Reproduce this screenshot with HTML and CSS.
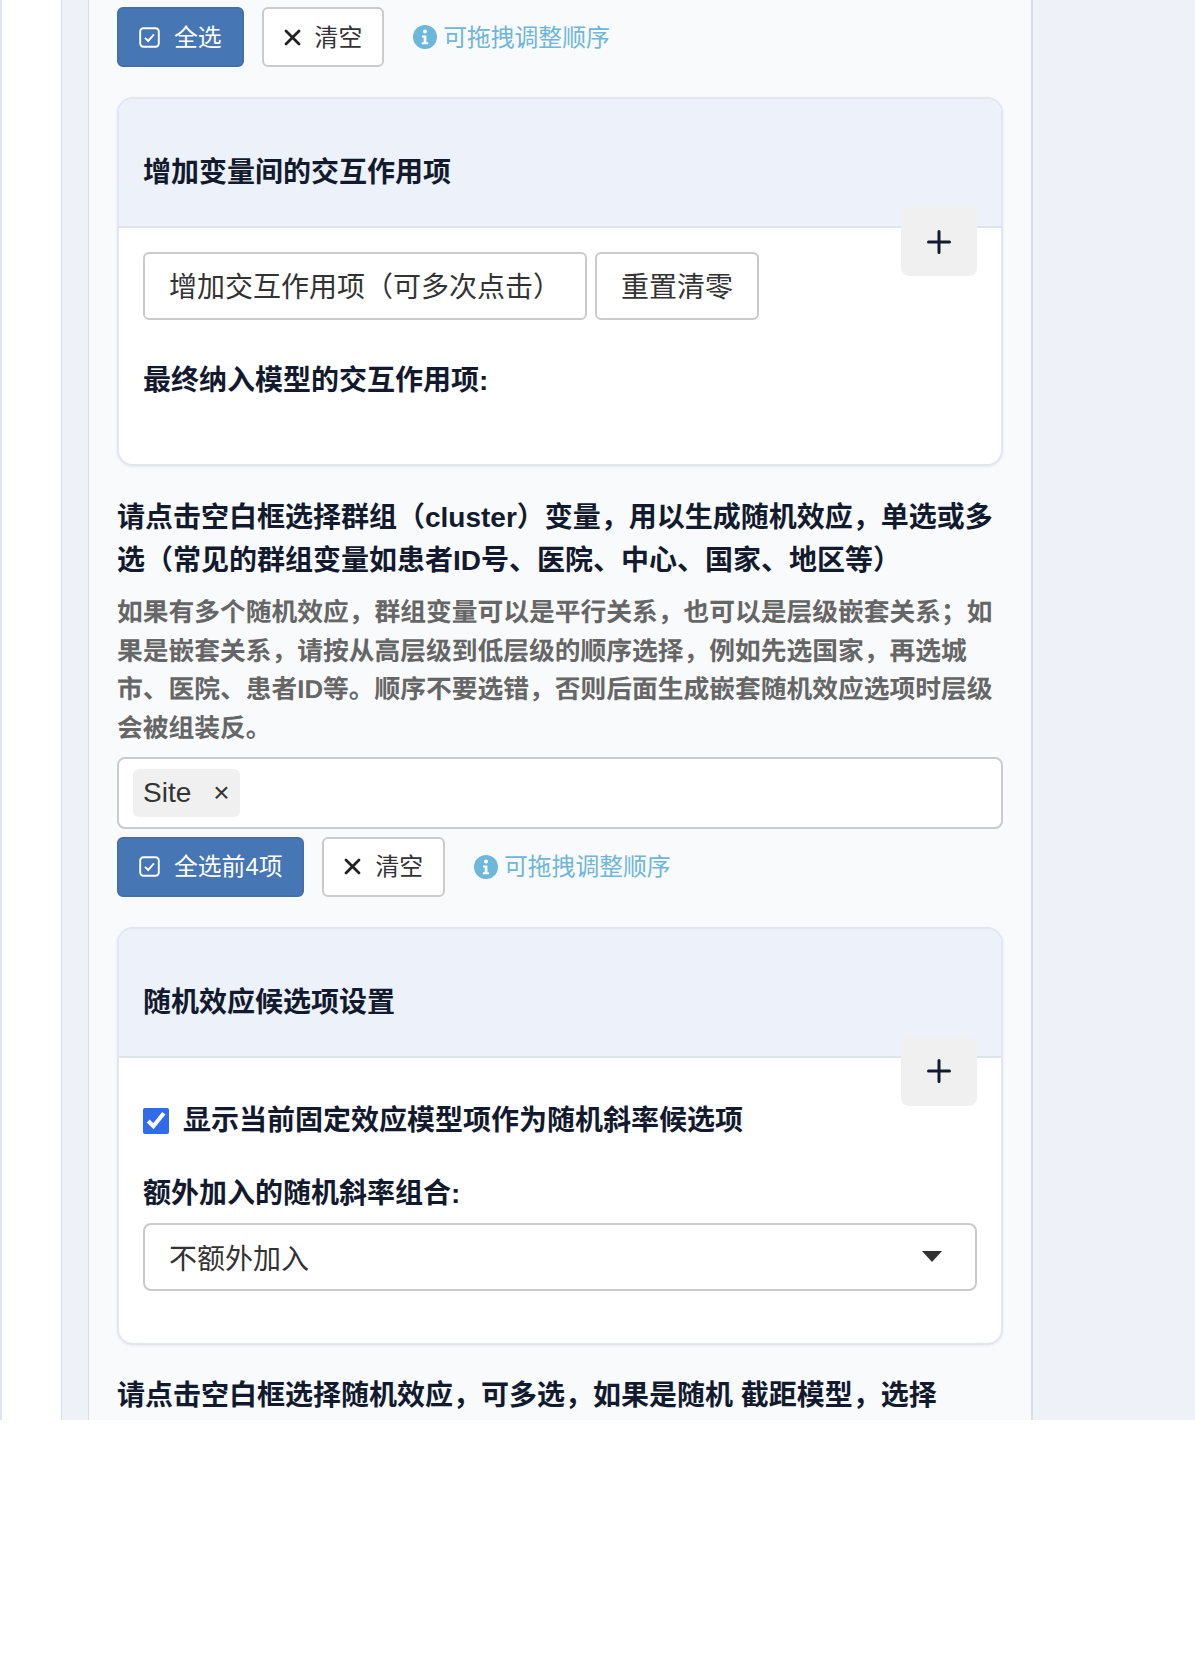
FILE: index.html
```html
<!DOCTYPE html>
<html lang="zh">

<head>
    <meta charset="UTF-8">
    <title>模型设置</title>
    <link rel="stylesheet" href="styles.css">
</head>

<body>
    <div class="frame">
        <div class="gutter"></div>
        <div class="strip"></div>
        <div class="panel">
            <div class="tools">
                <button class="btn primary">
                    <svg class="ico-check" viewBox="0 0 21 21"><rect x="1.2" y="1.2" width="18.6" height="18.6" rx="3.2"/><path d="M6 10.8l3.2 3.2 5.8-6.6"/></svg>
                    <span class="txt">全选</span>
                </button>
                <button class="btn">
                    <svg class="ico-x" viewBox="0 0 17 17"><path d="M2 2l13 13M15 2L2 15"/></svg>
                    <span class="txt">清空</span>
                </button>
                <span class="hint">
                    <svg class="ico-info" viewBox="0 0 24 24"><circle cx="12" cy="12" r="12"/><circle cx="12" cy="6.6" r="2"/><path d="M9 10.6h4.4v6.6h1.8v2H8.8v-2h1.9v-4.6H9z"/></svg>
                    <span class="txt">可拖拽调整顺序</span>
                </span>
            </div>

            <section class="card">
                <div class="card-head">增加变量间的交互作用项</div>
                <button class="plus"><svg viewBox="0 0 24 24"><path d="M12 1.5v21M1.5 12h21"/></svg></button>
                <div class="card-body">
                    <div class="actions">
                        <button class="btn big">增加交互作用项（可多次点击）</button>
                        <button class="btn big">重置清零</button>
                    </div>
                    <div class="label result">最终纳入模型的交互作用项:</div>
                </div>
            </section>

            <h4 class="title">请点击空白框选择群组（cluster）变量，用以生成随机效应，单选或多选（常见的群组变量如患者ID号、医院、中心、国家、地区等）</h4>
            <p class="help">如果有多个随机效应，群组变量可以是平行关系，也可以是层级嵌套关系；如果是嵌套关系，请按从高层级到低层级的顺序选择，例如先选国家，再选城市、医院、患者ID等。顺序不要选错，否则后面生成嵌套随机效应选项时层级会被组装反。</p>

            <div class="multi">
                <span class="tag">Site<span class="tag-x">×</span></span>
            </div>

            <div class="tools under">
                <button class="btn primary">
                    <svg class="ico-check" viewBox="0 0 21 21"><rect x="1.2" y="1.2" width="18.6" height="18.6" rx="3.2"/><path d="M6 10.8l3.2 3.2 5.8-6.6"/></svg>
                    <span class="txt">全选前4项</span>
                </button>
                <button class="btn">
                    <svg class="ico-x" viewBox="0 0 17 17"><path d="M2 2l13 13M15 2L2 15"/></svg>
                    <span class="txt">清空</span>
                </button>
                <span class="hint">
                    <svg class="ico-info" viewBox="0 0 24 24"><circle cx="12" cy="12" r="12"/><circle cx="12" cy="6.6" r="2"/><path d="M9 10.6h4.4v6.6h1.8v2H8.8v-2h1.9v-4.6H9z"/></svg>
                    <span class="txt">可拖拽调整顺序</span>
                </span>
            </div>

            <section class="card">
                <div class="card-head">随机效应候选项设置</div>
                <button class="plus"><svg viewBox="0 0 24 24"><path d="M12 1.5v21M1.5 12h21"/></svg></button>
                <div class="card-body">
                    <label class="check"><input type="checkbox" checked> 显示当前固定效应模型项作为随机斜率候选项</label>
                    <div class="label extra">额外加入的随机斜率组合:</div>
                    <div class="select">不额外加入<span class="caret"></span></div>
                </div>
            </section>

            <h4 class="title last">请点击空白框选择随机效应，可多选，如果是随机 截距模型，选择</h4>
        </div>
        <div class="side"></div>
    </div>
</body>

</html>
```

FILE: styles.css
```css
body {
    margin: 0;
    background: #fff;
    color: #141a2e;
    font-family: "Liberation Sans", "Noto Sans CJK SC", sans-serif;
    font-size: 28px;
}

.frame {
    display: flex;
    height: 1420px;
    overflow: hidden;
}

.gutter {
    width: 59px;
    border-left: 2px solid #dfe3ee;
}

.strip {
    width: 26px;
    background: #eef2f8;
    border-left: 1px solid #d9dde8;
}

.panel {
    width: 886px;
    padding: 7px 28px 0 28px;
    background: #f8fafc;
    border-left: 1px solid #d9dde8;
    border-right: 2px solid #d9dde8;
}

.side {
    flex: 1;
    background: #eef1f7;
}

.tools {
    display: flex;
    align-items: center;
    height: 60px;
}

.tools.under {
    margin-top: 8px;
}

.txt {
    margin-bottom: 4px;
}

.btn {
    display: flex;
    align-items: center;
    gap: 14px;
    height: 60px;
    padding: 0 20px;
    box-sizing: border-box;
    margin-right: 18px;
    border: 2px solid #cbcbcb;
    border-radius: 6px;
    background: #fff;
    color: #333;
    font: inherit;
    font-size: 23.8px;
}

.btn.primary {
    background: #4676b3;
    border-color: #4170ab;
    color: #fff;
}

.btn.big {
    height: 68px;
    padding: 0 24px 2px 24px;
    margin-right: 8px;
    font-size: 28px;
}

.ico-check {
    width: 21px;
    height: 21px;
    fill: none;
    stroke: #fff;
    stroke-width: 1.9;
}

.ico-x {
    width: 17px;
    height: 17px;
    fill: none;
    stroke: #222;
    stroke-width: 2.8;
    stroke-linecap: round;
}

.hint {
    display: flex;
    align-items: center;
    gap: 6px;
    margin-left: 11px;
    color: #6fb6d8;
    font-size: 23.8px;
}

.ico-info {
    width: 24px;
    height: 24px;
    fill: #fff;
}

.ico-info circle:first-child {
    fill: #6cb7da;
}

.card {
    position: relative;
    margin-top: 30px;
    border: 2px solid #e1e6f0;
    border-radius: 16px;
    background: #fff;
    box-shadow: 0 1px 3px rgba(40, 50, 80, 0.08);
}

.card-head {
    height: 129px;
    box-sizing: border-box;
    padding: 54px 24px 0 24px;
    line-height: 40px;
    font-weight: 700;
    background: #edf2fa;
    border-bottom: 2px solid #dfe3ea;
    border-radius: 14px 14px 0 0;
}

.plus {
    position: absolute;
    top: 108px;
    right: 24px;
    width: 76px;
    height: 69px;
    padding: 0;
    border: 0;
    border-radius: 8px;
    background: #f0f0f0;
    display: flex;
    align-items: center;
    justify-content: center;
}

.plus svg {
    width: 24px;
    height: 24px;
    fill: none;
    stroke: #141a2e;
    stroke-width: 3;
    stroke-linecap: round;
}

.card-body {
    padding: 24px 24px 0 24px;
}

.actions {
    display: flex;
}

.label {
    line-height: 40px;
    font-weight: 700;
}

.label.result {
    margin-top: 41px;
    padding-bottom: 63px;
}

.check {
    display: flex;
    align-items: center;
    gap: 14px;
    margin-top: 19px;
    line-height: 40px;
    font-weight: 700;
}

.check input {
    width: 26px;
    height: 26px;
    margin: 0;
    accent-color: #2f6bea;
}

.label.extra {
    margin-top: 33px;
}

.select {
    display: flex;
    align-items: center;
    justify-content: space-between;
    height: 68px;
    box-sizing: border-box;
    margin: 9px 0 52px 0;
    padding: 0 33px 0 24px;
    border: 2px solid #cbcbcb;
    border-radius: 8px;
    background: #fff;
    color: #333;
}

.caret {
    width: 0;
    height: 0;
    border-left: 10px solid transparent;
    border-right: 10px solid transparent;
    border-top: 11px solid #333;
}

.title {
    margin: 30px 0 0 0;
    font-size: 28px;
    line-height: 43px;
    font-weight: 700;
}

.title.last {
    margin-top: 29px;
}

.help {
    margin: 12px 0 0 0;
    color: #666;
    font-size: 25.75px;
    line-height: 38.7px;
    font-weight: 700;
    text-rendering: geometricPrecision;
}

.multi {
    display: flex;
    align-items: center;
    height: 72px;
    box-sizing: border-box;
    margin-top: 8px;
    padding-left: 14px;
    border: 2px solid #cbcbcb;
    border-radius: 8px;
    background: #fff;
}

.tag {
    display: flex;
    align-items: center;
    height: 48px;
    padding: 0 10px;
    border-radius: 6px;
    background: #f0f0f0;
    color: #333;
}

.tag-x {
    margin-left: 22px;
}
```
